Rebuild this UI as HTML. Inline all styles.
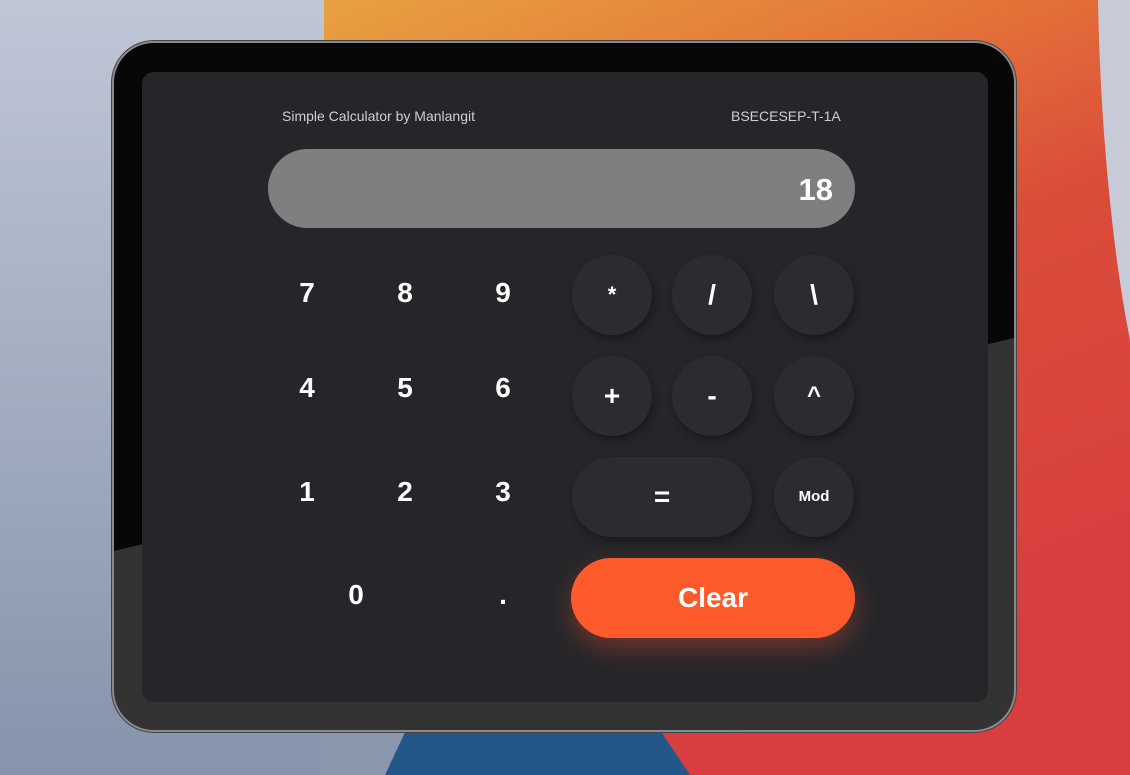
<!DOCTYPE html>
<html><head><style>
body{margin:0;width:1130px;height:775px;overflow:hidden;position:relative;font-family:"Liberation Sans",sans-serif}
.bg{position:absolute;left:0;top:0}
.tab{position:absolute;left:112px;top:41px;width:900px;height:687px;border-radius:42px;border:2px solid #8a8a8c;overflow:hidden;background:#333334;box-shadow:0 0 0 1px #444}
.tab .blk{position:absolute;left:0;top:0;width:100%;height:100%;background:#070707;clip-path:polygon(0 0,100% 0,100% 295px,0 508px)}
.scr{position:absolute;left:142px;top:72px;width:846px;height:630px;border-radius:12px;background:#25262a}
.t{position:absolute;color:#cfcfd2;font-size:14px;top:108px}
.disp{position:absolute;left:268px;top:149px;width:587px;height:79px;border-radius:40px;background:#7f7f7f;color:#fff;font-weight:bold;font-size:31px;text-align:right;box-sizing:border-box;padding-right:22px;line-height:82px}
.k{position:absolute;color:#fff;font-weight:bold;font-size:28px;width:80px;height:80px;line-height:80px;text-align:center;margin-left:-40px;margin-top:-40px}
.c{background:#2b2c30;border-radius:40px;box-shadow:2px 4px 8px rgba(0,0,0,.35)}
.clr{position:absolute;left:571px;top:558px;width:284px;height:80px;border-radius:40px;background:#ff5a2c;color:#fff;font-weight:bold;font-size:28px;text-align:center;line-height:80px;box-shadow:0 10px 25px rgba(255,80,50,.35)}
</style></head><body>
<svg class="bg" width="1130" height="775">
<defs>
<linearGradient id="g1" x1="0" y1="0" x2="0" y2="1"><stop offset="0" stop-color="#bfc6d6"/><stop offset="1" stop-color="#8594ab"/></linearGradient>
<linearGradient id="g2" x1="0" y1="0" x2="0.6" y2="1"><stop offset="0" stop-color="#e9b845"/><stop offset="0.35" stop-color="#e47b38"/><stop offset="0.6" stop-color="#db4c3a"/><stop offset="1" stop-color="#d83e40"/></linearGradient>
</defs>
<rect width="1130" height="775" fill="url(#g2)"/>
<path d="M1098 0 H1130 V340 C1112 250 1100 120 1098 0Z" fill="#c7cbd8"/>
<rect x="0" y="0" width="324" height="775" fill="url(#g1)"/>
<path d="M385 775 L420 700 H640 L690 775Z" fill="#235789"/>
<path d="M320 700 H420 L385 775 H320Z" fill="#8a97ac"/>
</svg>
<div class="tab"><div class="blk"></div></div>
<div class="scr"></div>
<div class="t" style="left:282px">Simple Calculator by Manlangit</div>
<div class="t" style="left:731px">BSECESEP-T-1A</div>
<div class="disp">18</div>
<div class="k" style="left:307px;top:293px">7</div>
<div class="k" style="left:405px;top:293px">8</div>
<div class="k" style="left:503px;top:293px">9</div>
<div class="k" style="left:307px;top:388px">4</div>
<div class="k" style="left:405px;top:388px">5</div>
<div class="k" style="left:503px;top:388px">6</div>
<div class="k" style="left:307px;top:492px">1</div>
<div class="k" style="left:405px;top:492px">2</div>
<div class="k" style="left:503px;top:492px">3</div>
<div class="k" style="left:356px;top:595px">0</div>
<div class="k" style="left:503px;top:595px">.</div>
<div class="k c" style="left:612px;top:295px;font-size:22px">*</div>
<div class="k c" style="left:712px;top:295px">/</div>
<div class="k c" style="left:814px;top:295px">\</div>
<div class="k c" style="left:612px;top:396px">+</div>
<div class="k c" style="left:712px;top:396px">-</div>
<div class="k c" style="left:814px;top:396px;font-size:24px">^</div>
<div class="k c" style="left:612px;top:497px;width:180px">=</div>
<div class="k c" style="left:814px;top:497px;font-size:15px">Mod</div>
<div class="clr">Clear</div>
</body></html>
